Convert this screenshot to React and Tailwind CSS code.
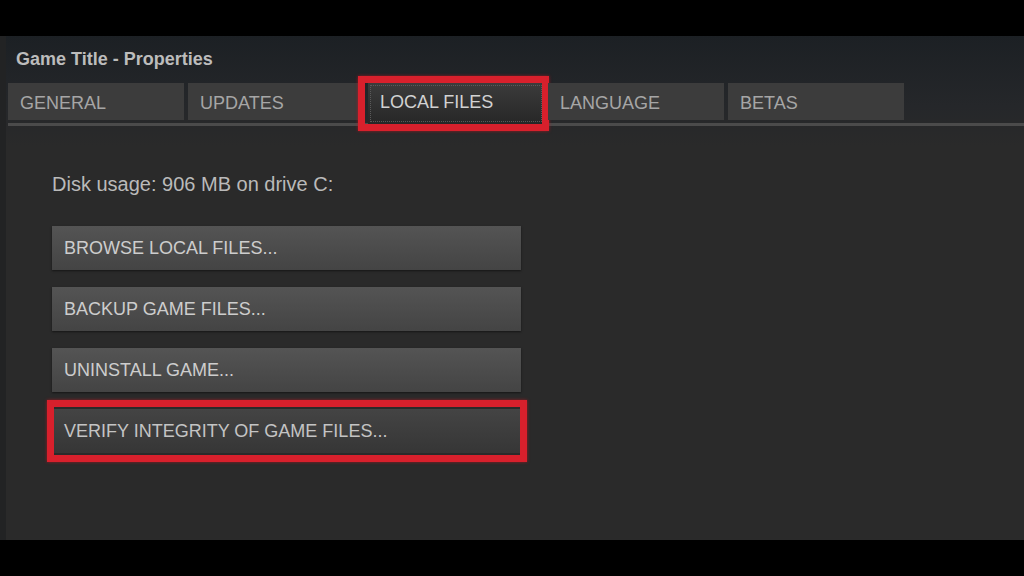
import React from "react";

const tabs = ["GENERAL", "UPDATES", "LOCAL FILES", "LANGUAGE", "BETAS"];
const actions = [
    "BROWSE LOCAL FILES...",
    "BACKUP GAME FILES...",
    "UNINSTALL GAME...",
];

export default function App() {
    return (
        <div className="w-[1024px] h-[576px] bg-black flex flex-col py-[36px] font-['Liberation_Sans',Arial,sans-serif]">
            {/* Properties window */}
            <div className="flex-1 flex flex-col border-l-[6px] border-[#222324] bg-[linear-gradient(180deg,#1c2024_0px,#25272a_70px,#2a2a2a_110px,#2a2a2a_100%)]">
                {/* Title */}
                <div className="pt-[12px] pl-[10px] text-[18px] leading-[22px] font-bold text-[#bcbcbc]">
                    Game Title - Properties
                </div>

                {/* Tabs */}
                <div className="mt-[13px] pl-[2px] flex gap-[4px] h-[37px]">
                    {tabs.map((t) => {
                        const active = t === "LOCAL FILES";
                        return (
                            <div key={t} className="relative w-[176px]">
                                {active ? (
                                    <div className="h-[41px] flex items-center px-[12px] pb-[2px] bg-[linear-gradient(180deg,#3b3b3b,#272727)] outline-1 outline-dotted outline-[#5a5a5a] -outline-offset-[3px] text-[18px] text-[#d2d2d2]">
                                        {t}
                                    </div>
                                ) : (
                                    <div className="h-full flex items-center px-[12px] pt-[3px] bg-[#3c3c3c] text-[18px] text-[#a6a6a6]">
                                        {t}
                                    </div>
                                )}
                                {active && (
                                    <div className="absolute -left-[10px] -right-[5px] -top-[7px] -bottom-[11px] border-[7px] border-[#d8202c] shadow-[0_0_3px_rgba(200,20,30,0.7)]" />
                                )}
                            </div>
                        );
                    })}
                </div>
                <div className="mt-[3px] ml-[2px] h-[3px] bg-[#4b4b4b]" />

                {/* Local files content */}
                <div className="pl-[46px] pt-[46px] flex flex-col">
                    <div className="text-[20px] leading-[24px] text-[#bababa]">
                        Disk usage: 906 MB on drive C:
                    </div>
                    <div className="mt-[30px] flex flex-col gap-[17px] w-[469px]">
                        {actions.map((a) => (
                            <div
                                key={a}
                                className="h-[44px] flex items-center px-[12px] bg-[linear-gradient(180deg,#545454,#444444)] text-[18px] text-[#cdcdcd] shadow-[0_1px_2px_rgba(0,0,0,0.5)]"
                            >
                                {a}
                            </div>
                        ))}
                        <div className="relative h-[44px]">
                            <div className="h-full flex items-center px-[12px] bg-[linear-gradient(180deg,#444444,#363636)] text-[18px] text-[#c4c4c4]">
                                VERIFY INTEGRITY OF GAME FILES...
                            </div>
                            <div className="absolute -left-[5px] -right-[6px] -top-[9px] -bottom-[9px] border-[7px] border-[#d8202c] shadow-[0_0_3px_rgba(200,20,30,0.7)]" />
                        </div>
                    </div>
                </div>
            </div>
        </div>
    );
}
